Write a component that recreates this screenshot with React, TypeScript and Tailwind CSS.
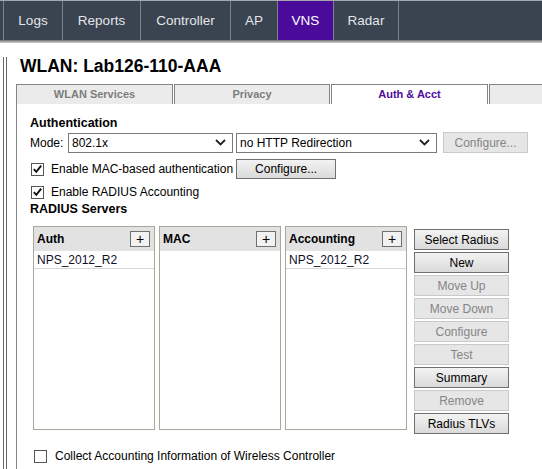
import React from 'react';

const navItems = [
	{ label: 'Logs', w: 'w-[59px]', active: false },
	{ label: 'Reports', w: 'w-[78px]', active: false },
	{ label: 'Controller', w: 'w-[90px]', active: false },
	{ label: 'AP', w: 'w-[47px]', active: false },
	{ label: 'VNS', w: 'w-[56px]', active: true },
	{ label: 'Radar', w: 'w-[65px]', active: false },
];

const buttons = [
	{ label: 'Select Radius', on: true },
	{ label: 'New', on: true },
	{ label: 'Move Up', on: false },
	{ label: 'Move Down', on: false },
	{ label: 'Configure', on: false },
	{ label: 'Test', on: false },
	{ label: 'Summary', on: true },
	{ label: 'Remove', on: false },
	{ label: 'Radius TLVs', on: true },
];

function Checkbox({ checked }: { checked?: boolean }) {
	return (
		<svg width="13" height="13" viewBox="0 0 13 13" className="shrink-0">
			<rect x="0.5" y="0.5" width="12" height="12" fill="#fff" stroke="#555" />
			{checked && <path d="M2.8 6.2 L5.3 8.9 L10.2 2.6" fill="none" stroke="#111" strokeWidth="1.9" />}
		</svg>
	);
}

function Select({ value, width }: { value: string; width: string }) {
	return (
		<div className={`${width} flex h-[20px] items-center justify-between border border-[#7a7a7a] bg-white pl-[3px] pr-[6px]`}>
			<span>{value}</span>
			<svg width="11" height="7" viewBox="0 0 11 7">
				<path d="M1 1 L5.5 5.5 L10 1" fill="none" stroke="#222" strokeWidth="1.8" />
			</svg>
		</div>
	);
}

function Btn({ label, on = true, className = '' }: { label: string; on?: boolean; className?: string }) {
	return (
		<div
			className={`flex items-center justify-center border ${
				on
					? 'border-[#707070] bg-gradient-to-b from-[#f3f3f3] to-[#dadada] text-black'
					: 'border-[#c9c9c9] bg-[#e6e6e6] text-[#858585]'
			} ${className}`}
		>
			{label}
		</div>
	);
}

function ServerList({ title, entry }: { title: string; entry?: string }) {
	return (
		<div className="flex h-[204px] w-[122px] flex-col border border-[#aca899]">
			<div className="flex h-[24px] items-center justify-between bg-[#e2e2e2] pl-[3px] pr-[4px]">
				<span className="font-bold">{title}</span>
				<div className="flex h-[16px] w-[20px] items-center justify-center border border-[#6f6f6f] bg-[#f2f2f2] text-[14px] leading-none">
					+
				</div>
			</div>
			{entry && (
				<div className="flex h-[18px] items-center border-b border-[#d6d6d6] pl-[3px] text-[#0f0f2a]">{entry}</div>
			)}
		</div>
	);
}

export default function App() {
	return (
		<div className="h-[469px] w-[542px] overflow-hidden bg-white font-['Liberation_Sans',Arial,sans-serif] text-[12px] text-black">
			{/* top navigation */}
			<div className="flex h-[40px] border-t border-[#a4a8ae] bg-[#3a4350] pl-[3px]">
				<div className="flex border-l border-[#7b838e]">
					{navItems.map((n) => (
						<div
							key={n.label}
							className={`${n.w} flex items-center justify-center border-r border-[#7b838e] pt-[2px] text-[13.5px] ${
								n.active ? 'bg-[#4a0a9a] text-white' : 'text-[#e2e6ea]'
							}`}
						>
							{n.label}
						</div>
					))}
				</div>
			</div>
			<div className="h-[3px] bg-gradient-to-b from-[#6e6e6e] to-[#d6d6d6]" />

			<div className="flex h-[426px]">
				{/* left frame lines */}
				<div className="w-[16px] pl-[3px] pt-[14px]">
					<div className="h-full w-[4px] border-x border-[#6a6a6a]" />
				</div>

				<div className="flex flex-1 flex-col">
					<h1 className="mt-[13px] mb-[8px] pl-[4px] text-[17.5px] leading-[20px] font-bold">WLAN: Lab126-110-AAA</h1>

					{/* tabs */}
					<div className="flex h-[20px] text-[11px] font-bold">
						<div className="flex w-[157px] items-center justify-center border border-b-0 border-[#858585] bg-[#ebebeb] text-[#7d7d7d]">
							WLAN Services
						</div>
						<div className="ml-[1px] flex w-[156px] items-center justify-center border border-b-0 border-[#858585] bg-[#ebebeb] text-[#7d7d7d]">
							Privacy
						</div>
						<div className="ml-[1px] flex w-[157px] items-center justify-center border border-b-0 border-[#858585] bg-white text-[#4f0c9c]">
							Auth &amp; Acct
						</div>
						<div className="ml-[1px] flex-1 border border-r-0 border-b-0 border-[#858585] bg-[#ebebeb]" />
					</div>

					{/* tab panel */}
					<div className="flex-1 border-l border-[#858585] pt-[11px] pl-[13px]">
						<div className="text-[12.5px] leading-[16px] font-bold">Authentication</div>

						<div className="mt-[1px] flex items-center">
							<span className="w-[38px]">Mode:</span>
							<Select value="802.1x" width="w-[165px]" />
							<div className="w-[3px]" />
							<Select value="no HTTP Redirection" width="w-[201px]" />
							<Btn label="Configure..." on={false} className="ml-[6px] h-[21px] w-[85px]" />
						</div>

						<div className="mt-[6px] flex h-[20px] items-center">
							<div className="ml-[1px] flex items-center gap-[7px]">
								<Checkbox checked />
								<span>Enable MAC-based authentication</span>
							</div>
							<Btn label="Configure..." className="ml-[3px] h-[20px] w-[100px]" />
						</div>

						<div className="mt-[5px] ml-[1px] flex h-[16px] items-center gap-[7px]">
							<Checkbox checked />
							<span>Enable RADIUS Accounting</span>
						</div>

						<div className="mt-[1px] text-[12.5px] leading-[16px] font-bold">RADIUS Servers</div>

						<div className="mt-[9px] ml-[3px] flex items-start">
							<div className="flex gap-[4px]">
								<ServerList title="Auth" entry="NPS_2012_R2" />
								<ServerList title="MAC" />
								<ServerList title="Accounting" entry="NPS_2012_R2" />
							</div>
							<div className="ml-[7px] flex flex-col gap-[2px] pt-[3px]">
								{buttons.map((b) => (
									<Btn key={b.label} label={b.label} on={b.on} className="h-[21px] w-[95px]" />
								))}
							</div>
						</div>

						<div className="mt-[14px] ml-[4px] flex h-[16px] items-center gap-[8px]">
							<Checkbox />
							<span>Collect Accounting Information of Wireless Controller</span>
						</div>
					</div>
				</div>
			</div>
		</div>
	);
}
